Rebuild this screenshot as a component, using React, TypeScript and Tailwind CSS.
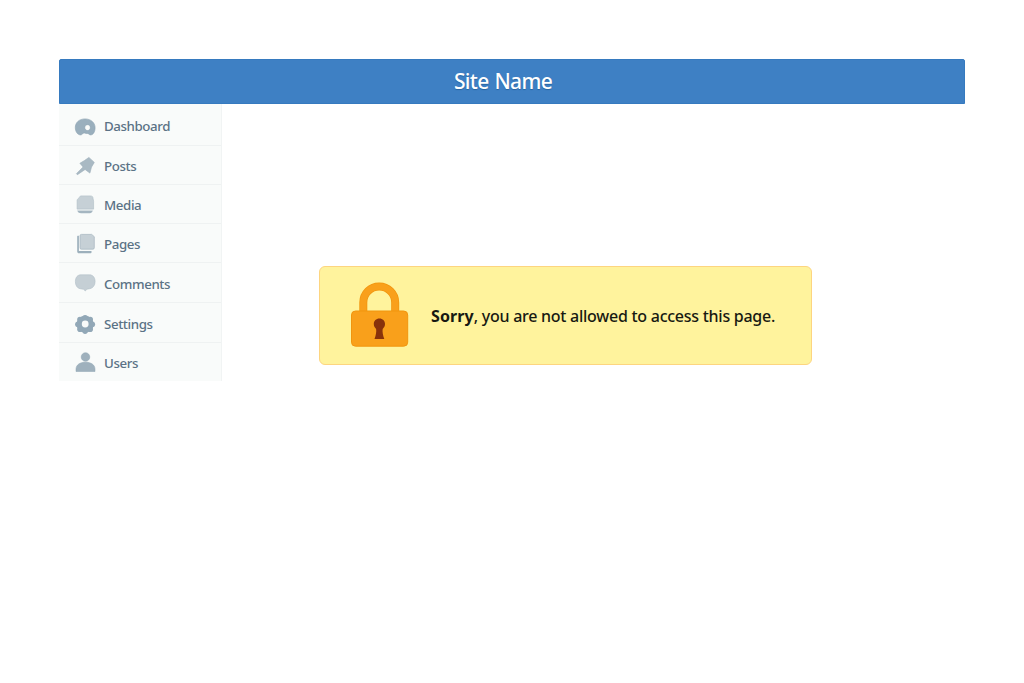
import React from 'react';

const DashboardIcon = () => (
  <svg viewBox="0 0 24 24" className="w-6 h-6" fill="#9aafbd" stroke="#8ba1b0" strokeWidth="0.6">
    <path
      fillRule="evenodd"
      d="M12 3.900C6 3.900 2.300 7.700 2.300 12.500c0 4.400 2.500 7.400 5.200 7.400 2 0 2.300-1.900 3.400-1.900 1.200 0 1.700.7 3.600.5 1.300-.1 1.500 1.400 3.100 1.400 2.600 0 4.500-3.100 4.500-7.200 0-4.900-4.100-8.800-10.100-8.800zM14.600 9.700c1.700 0 2.700 1.300 2.700 2.900s-1 2.900-2.700 2.900-2.800-1.300-2.800-2.900 1.100-2.900 2.800-2.900z"
    />
  </svg>
);

const PostsIcon = () => (
  <svg viewBox="0 0 24 24" className="w-6 h-6" fill="#a9b9c3" stroke="#9aadb9" strokeWidth="0.6" strokeLinejoin="round">
    <path d="M6.900 9.300l4.600-2.800 4.400-3.100 5.400 5-2.800 4.700-1.600 6-4.800-3.600-7.700 5.200-1-1L10.100 13z" />
  </svg>
);

const MediaIcon = () => (
  <svg viewBox="0 0 24 24" className="w-6 h-6">
    <path d="M4.200 17.800h15.700c-.2 2.300-1.400 3.500-3.200 3.500H8.200c-2.300 0-3.800-1.100-4-3.500z" fill="#a5b6c1" />
    <path d="M3.800 17.100h16.600v1.500H3.800z" fill="#f2f5f6" />
    <path d="M7.500 3.900h10c1.600 0 2.500.8 2.500 2.300l.6 3.100v7.800H4.100V7.900z" fill="#c6d0d6" stroke="#afbdc6" strokeWidth="0.6" />
  </svg>
);

const PagesIcon = () => (
  <svg viewBox="0 0 24 24" className="w-6 h-6">
    <path d="M4.700 4.800h1.200V20h12.600v1.400c0 .5-.3.800-.8.800H6c-1.100 0-1.800-.7-1.800-1.800V5.400c0-.4.100-.6.500-.6z" fill="#9db0bc" />
    <path d="M8.300 3.400h10.400l2.600 2.300v11.100c0 .9-.5 1.400-1.400 1.400H8.300c-.8 0-1.300-.5-1.300-1.300V4.700c0-.8.500-1.300 1.300-1.300z" fill="#c6d0d6" stroke="#a5b5bf" strokeWidth="0.7" />
  </svg>
);

const CommentsIcon = () => (
  <svg viewBox="0 0 24 24" className="w-6 h-6" fill="#c5cfd5" stroke="#b2bfc8" strokeWidth="0.6">
    <path d="M8 3.800h8.500c3.300 0 5.600 2.700 5.600 6.700 0 3.900-2.100 6.600-5.300 7.200l-3 .5-1.500 1.800-1.800-1.700-3.400-.6c-3-.6-4.700-3.300-4.700-7.200C2.400 6.500 4.500 3.800 8 3.800z" />
  </svg>
);

const SettingsIcon = () => (
  <svg viewBox="0 0 24 24" className="w-6 h-6">
    <g fill="#92a8b7">
      <circle cx="12.100" cy="12.300" r="8.500" />
      <circle cx="12.100" cy="5.700" r="2.800" />
      <circle cx="17.200" cy="7.500" r="2.800" />
      <circle cx="19.200" cy="12.300" r="2.900" />
      <circle cx="17.200" cy="17.200" r="2.800" />
      <circle cx="12.100" cy="19.100" r="2.800" />
      <circle cx="7" cy="17.200" r="2.800" />
      <circle cx="5" cy="12.300" r="2.900" />
      <circle cx="7" cy="7.500" r="2.800" />
    </g>
    <circle cx="12.200" cy="12" r="3.400" fill="#f9fbfa" />
  </svg>
);

const UsersIcon = () => (
  <svg viewBox="0 0 24 24" className="w-6 h-6" fill="#9fb1bd" stroke="#8fa5b3" strokeWidth="0.5">
    <circle cx="12.500" cy="7" r="4.300" />
    <path d="M3 21.500v-2.300c0-4.400 4-7 9.500-7s9.500 2.600 9.500 7v2.300z" />
  </svg>
);

const menuItems = [
  { label: 'Dashboard', icon: DashboardIcon, row: 'h-[42px] pt-1', text: 'pt-px' },
  { label: 'Posts', icon: PostsIcon, row: 'h-[39px] pt-0.5', text: 'pt-0.5' },
  { label: 'Media', icon: MediaIcon, row: 'h-[39px]', text: 'pt-[3px]' },
  { label: 'Pages', icon: PagesIcon, row: 'h-[39px]', text: 'pt-[3px]' },
  { label: 'Comments', icon: CommentsIcon, row: 'h-10 pt-px', text: 'pt-[3px]' },
  { label: 'Settings', icon: SettingsIcon, row: 'h-10 pt-0.5', text: 'pt-[3px]' },
  { label: 'Users', icon: UsersIcon, row: 'h-[38px]', text: 'pt-[3px]' },
];

const Sidebar = () => (
  <nav className="w-[163px] shrink-0 bg-[#f9fbfa] border-r border-[#f1f4f4]">
    {menuItems.map(({ label, icon: Icon, row, text }) => (
      <a
        key={label}
        className={`flex items-center gap-[7px] pl-[14px] border-b border-[#eff2f2] last:border-b-0 ${row}`}
      >
        <Icon />
        <span className={`text-[13.3px] font-[480] tracking-[-0.4px] text-[#5b7285] ${text}`}>{label}</span>
      </a>
    ))}
  </nav>
);

const LockIcon = () => (
  <svg viewBox="0 0 58 66" className="w-[58px] h-[66px] shrink-0 mb-px">
    <path
      d="M12.300 30V20.500C12.300 11.500 19.500 4.500 28.200 4.500S44.200 11.500 44.200 20.500V30"
      fill="none"
      stroke="#f1950f"
      strokeWidth="8"
    />
    <path
      d="M12.300 30V20.500C12.300 11.500 19.500 4.500 28.200 4.500S44.200 11.500 44.200 20.500V30"
      fill="none"
      stroke="#f9a01b"
      strokeWidth="6.500"
    />
    <rect x="0.500" y="29" width="56.200" height="35.200" rx="4" fill="#f9a01b" stroke="#f1950f" strokeWidth="1" />
    <path
      d="M28.400 36.500c3.300 0 5.600 2.400 5.600 5.600 0 2-.9 3.600-2.300 4.900-.5 2.600.2 6.100 1.600 10.100H23.500c1.400-4 2.100-7.500 1.600-10.100-1.400-1.300-2.300-2.900-2.300-4.900 0-3.200 2.300-5.600 5.600-5.600z"
      fill="#88320b"
    />
  </svg>
);

const App = () => {
  return (
    <div className="h-screen bg-white px-[59px] pt-[59px] font-['Noto_Sans','Open_Sans',sans-serif] overflow-hidden">
      <header className="w-[906px] h-[45px] rounded-t-[2px] bg-[#3e80c4] border border-[#367abf] flex items-center justify-center pr-[18px]">
        <h1 className="text-[21px] font-medium tracking-[-0.65px] [word-spacing:1px] text-white [text-shadow:0_1px_1px_#2864a0]">Site Name</h1>
      </header>
      <div className="flex items-start">
        <Sidebar />
        <main className="flex-1 pl-[97px] pt-[162px]">
          <div className="w-[493px] h-[99px] rounded-md border border-[#fdd580] bg-[#fff39d] flex items-center gap-[22px] pl-[31px]">
            <LockIcon />
            <p className="text-base font-medium tracking-[-0.26px] text-[#171912] whitespace-nowrap">
              <strong className="font-bold tracking-[0.1px]">Sorry</strong>, you are not allowed to access this page.
            </p>
          </div>
        </main>
      </div>
    </div>
  );
};

export default App;
